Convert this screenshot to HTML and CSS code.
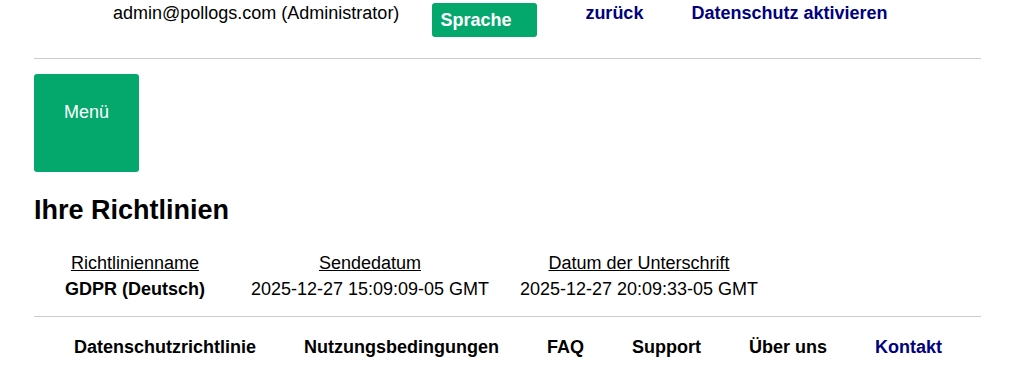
FILE: index.html
```html
<!DOCTYPE html>
<html lang="de">
<head>
<meta charset="utf-8">
<title>Ihre Richtlinien</title>
<link rel="stylesheet" href="styles.css">
</head>
<body>
<div class="page">
  <header class="topbar">
    <span class="user">admin@pollogs.com (Administrator)</span>
    <button class="btn-lang">Sprache</button>
    <a class="toplink" href="#">zurück</a>
    <a class="toplink" href="#">Datenschutz aktivieren</a>
  </header>
  <div class="rule rule-top"></div>
  <button class="btn-menu">Menü</button>
  <h2 class="title">Ihre Richtlinien</h2>
  <div class="policies">
    <div class="cell head">Richtlinienname</div>
    <div class="cell head">Sendedatum</div>
    <div class="cell head">Datum der Unterschrift</div>
    <div class="cell name">GDPR (Deutsch)</div>
    <div class="cell">2025-12-27 15:09:09-05 GMT</div>
    <div class="cell">2025-12-27 20:09:33-05 GMT</div>
  </div>
  <div class="rule rule-bottom"></div>
  <footer class="footer">
    <a href="#">Datenschutzrichtlinie</a>
    <a href="#">Nutzungsbedingungen</a>
    <a href="#">FAQ</a>
    <a href="#">Support</a>
    <a href="#">Über uns</a>
    <a href="#" class="contact">Kontakt</a>
  </footer>
</div>
</body>
</html>
```

FILE: styles.css
```css
html, body {
  margin: 0;
  padding: 0;
  background: #ffffff;
}

body {
  font-family: "Liberation Sans", Arial, Helvetica, sans-serif;
  font-size: 18px;
  color: #000000;
}

.page {
  margin: 0 43px 0 34px;
}

.topbar {
  display: flex;
  align-items: flex-start;
  padding: 3px 0 0 79px;
}

.user {
  margin-right: 33px;
}

.btn-lang {
  width: 105px;
  height: 34px;
  box-sizing: border-box;
  padding: 0 8px;
  margin-right: 48px;
  border: none;
  border-radius: 3px;
  background: #05a86c;
  color: #ffffff;
  font-family: inherit;
  font-size: 18px;
  font-weight: bold;
  text-align: left;
  line-height: 34px;
}

.toplink {
  color: #000080;
  font-weight: bold;
  text-decoration: none;
  margin-right: 48px;
}

.rule {
  height: 0;
  border-top: 1px solid #cccccc;
}

.rule-top {
  margin-top: 21px;
}

.btn-menu {
  display: flex;
  justify-content: center;
  align-items: flex-start;
  width: 105px;
  height: 98px;
  margin-top: 15px;
  padding: 28px 0 0;
  box-sizing: border-box;
  border: none;
  border-radius: 3px;
  background: #05a86c;
  color: #ffffff;
  font-family: inherit;
  font-size: 18px;
}

.title {
  margin: 23px 0 0;
  font-size: 27px;
  font-weight: bold;
  line-height: 31px;
}

.policies {
  display: grid;
  grid-template-columns: 202px 268px 270px;
  margin-top: 24px;
}

.cell {
  text-align: center;
  line-height: 26px;
  white-space: nowrap;
}

.cell.head {
  text-decoration: underline;
}

.cell.name {
  font-weight: bold;
}

.rule-bottom {
  margin-top: 14px;
}

.footer {
  display: flex;
  gap: 48px;
  padding: 20px 0 0 40px;
}

.footer a {
  color: #000000;
  font-weight: bold;
  text-decoration: none;
}

.footer a.contact {
  color: #000080;
}
```
